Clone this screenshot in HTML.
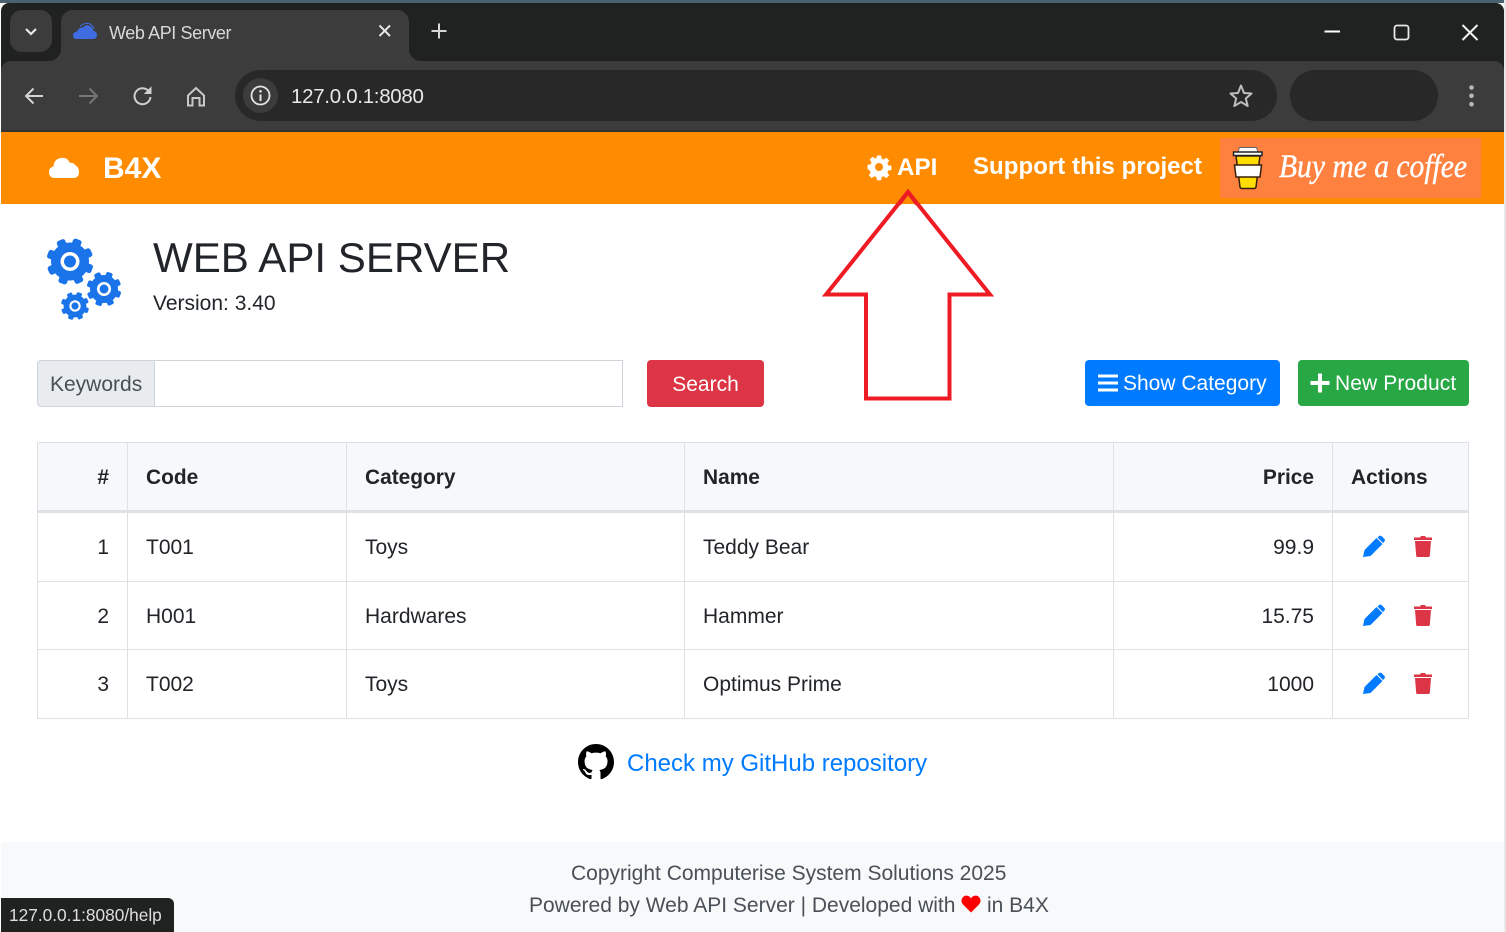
<!DOCTYPE html>
<html><head><meta charset="utf-8"><title>Web API Server</title>
<style>
html,body{margin:0;padding:0;background:#fff}
body{width:1506px;height:932px;position:relative;overflow:hidden;font-family:"Liberation Sans",sans-serif;color:#212529;font-size:21px}
.a{position:absolute;white-space:nowrap}
.l{position:absolute;background:#dee2e6}
.c{position:absolute;white-space:nowrap;line-height:24px;font-size:21px}
.h{font-weight:700;font-size:20.900px}
svg{position:absolute;overflow:visible}
</style></head><body>
<!-- window frame -->
<div class="a" style="left:0;top:0;width:1506px;height:3px;background:#4a626e"></div>
<div class="a" style="left:1504px;top:0;width:2px;height:932px;background:#e8e8e8"></div>
<div class="a" style="left:1px;top:3px;width:1503px;height:129px;background:#202221;border-radius:8px 8px 0 0"></div>
<!-- toolbar -->
<div class="a" style="left:1px;top:61px;width:1503px;height:71px;background:#3c3c3c;border-radius:10px 10px 0 0"></div>
<div class="a" style="left:1px;top:130px;width:1503px;height:2px;background:#333"></div>
<!-- tab -->
<div class="a" style="left:10px;top:10px;width:42px;height:42px;background:#3c3c3c;border-radius:12px"></div>
<svg style="left:0;top:0" width="60" height="60"><path d="M26 29l5 5 5-5" fill="none" stroke="#e6e6e6" stroke-width="2.2"/></svg>
<div class="a" style="left:61px;top:10px;width:348px;height:60px;background:#3c3c3c;border-radius:12px 12px 0 0"></div>
<svg style="left:50px;top:49px" width="12" height="13"><path d="M0 12A12 12 0 0 0 11 0V12Z" fill="#3c3c3c"/></svg>
<svg style="left:409px;top:49px" width="12" height="13"><path d="M12 12A12 12 0 0 1 0 0V12Z" fill="#3c3c3c"/></svg>
<svg style="left:72px;top:22px" width="26" height="18"><path d="M4 17Q1 17 1 13.500Q1 10 5 9.500Q7 5 11 5.500Q14 2 18 4Q21 5.500 21 8.500Q25 9.500 25 13Q25 17 21 17Z" fill="#3f6ce0"/><path d="M8 4.500Q12 .5 17 1.500Q21 3 22 7" fill="none" stroke="#3f6ce0" stroke-width="1"/></svg>
<div class="a" style="left:109px;top:22px;font-size:18px;line-height:22px;color:#d8d8d8;letter-spacing:-.4px">Web API Server</div>
<svg style="left:377px;top:23px" width="16" height="16"><path d="M2.500 2.500L13 13M13 2.500L2.500 13" stroke="#e8e8e8" stroke-width="2"/></svg>
<svg style="left:430px;top:22px" width="18" height="18"><path d="M9 1.500V16.500M1.500 9H16.500" stroke="#d8d8d8" stroke-width="2"/></svg>
<!-- window controls -->
<svg style="left:1320px;top:20px" width="170" height="24"><path d="M4.500 11.500H20" stroke="#fff" stroke-width="2"/><rect x="74.500" y="5.500" width="14" height="14" rx="2.500" fill="none" stroke="#e8e8e8" stroke-width="1.800"/><path d="M142.500 5L157.500 20M157.500 5L142.500 20" stroke="#f0f0f0" stroke-width="2"/></svg>
<!-- nav icons -->
<svg style="left:20px;top:82px" width="190" height="28">
<path d="M23 14H6.500M13.500 6.500L6 14L13.500 21.500" fill="none" stroke="#d4d4d4" stroke-width="2"/>
<path d="M59 14H76.500M69.500 6.500L77 14L69.500 21.500" fill="none" stroke="#767676" stroke-width="2"/>
<path d="M129 9.500A8 8 0 1 0 130.500 15" fill="none" stroke="#d0d0d0" stroke-width="2"/><path d="M131 5.500V11.500H125Z" fill="#d0d0d0" stroke="#d0d0d0" stroke-width="1"/>
<path d="M168 23.500V13.500L176 6L184 13.500V23.500H179.500V16H172.500V23.500Z" fill="none" stroke="#c8c8c8" stroke-width="2"/>
</svg>
<!-- omnibox -->
<div class="a" style="left:235px;top:70px;width:1042px;height:51px;border-radius:26px;background:#282828"></div>
<div class="a" style="left:243px;top:78px;width:35px;height:35px;border-radius:18px;background:#3c3c3c"></div>
<svg style="left:249px;top:84px" width="24" height="24"><circle cx="11.500" cy="11.500" r="9" fill="none" stroke="#e4e4e4" stroke-width="1.800"/><path d="M11.500 10.500V17" stroke="#e4e4e4" stroke-width="2"/><circle cx="11.500" cy="7.300" r="1.300" fill="#e4e4e4"/></svg>
<div class="a" style="left:291px;top:84px;font-size:20.500px;line-height:25px;color:#e8e8e8;letter-spacing:-.3px">127.0.0.1:8080</div>
<svg style="left:1228px;top:83px" width="26" height="26"><path d="M13 2.500L16 10L23.500 10.500L17.800 15.500L19.700 23L13 19L6.300 23L8.200 15.500L2.500 10.500L10 10Z" fill="none" stroke="#bdbdbd" stroke-width="2" stroke-linejoin="round"/></svg>
<div class="a" style="left:1290px;top:70px;width:148px;height:51px;border-radius:26px;background:#282828"></div>
<svg style="left:1465px;top:84px" width="14" height="24"><circle cx="6.500" cy="3.500" r="2.300" fill="#b8b8b8"/><circle cx="6.500" cy="11.800" r="2.300" fill="#b8b8b8"/><circle cx="6.500" cy="20.200" r="2.300" fill="#b8b8b8"/></svg>
<!-- navbar -->
<div class="a" style="left:1px;top:132px;width:1503px;height:72px;background:#ff8c00"></div>
<svg style="left:48px;top:155px" width="32" height="24"><path d="M7 23Q1 23 1 17Q1 12.500 5.500 11.500Q6 4 13 3Q19 1.500 22 8Q25 7 27 10Q31 12 31 17Q31 23 25 23Z" fill="#fff"/></svg>
<div class="a h" style="left:103px;top:152px;font-size:30px;line-height:34px;color:#fff">B4X</div>
<svg style="left:867px;top:155px" width="24" height="24" viewBox="0 0 24 24"><path fill="#fff" fill-rule="evenodd" d="M10 .5h4l.7 3.200 1.900.8 2.800-1.800 2.800 2.800-1.800 2.800.8 1.900 3.200.7v4l-3.200.7-.8 1.900 1.800 2.800-2.800 2.800-2.800-1.800-1.900.8-.7 3.200h-4l-.7-3.200-1.900-.8-2.800 1.800-2.800-2.800 1.800-2.800-.8-1.900L.5 14v-4l3.200-.7.8-1.900L2.700 4.600 5.500 1.800 8.300 3.600l1-.4ZM12 8a4 4 0 1 0 0 8 4 4 0 0 0 0-8Z"/></svg>
<div class="a h" style="left:897px;top:153px;font-size:24.200px;line-height:30px;color:#fff">API</div>
<div class="a h" style="left:973px;top:152px;font-size:24px;line-height:29px;color:#fff;letter-spacing:.05px">Support this project</div>
<div class="a" style="left:1220px;top:138px;width:261px;height:60px;background:#ff813f"></div>
<svg style="left:1232px;top:146px" width="32" height="44">
<path d="M4 10L8 41Q8.300 42.500 10 42.500H22Q23.700 42.500 24 41L28 10Z" fill="#ffdd00" stroke="#3a1f0a" stroke-width="1.500"/>
<path d="M2.500 19H29.500L28 31H4Z" fill="#fff" stroke="#3a1f0a" stroke-width="1.500"/>
<path d="M6 6L7.500 1.500H24.500L26 6Z" fill="#fff" stroke="#666" stroke-width="1"/>
<rect x="1.500" y="6" width="28.500" height="3.500" fill="#fff" stroke="#222" stroke-width="1.500"/>
</svg>
<svg style="left:1278px;top:146px" width="192" height="46"><text x="1" y="31" font-family="Liberation Serif,serif" font-style="italic" font-size="33" fill="#fff" stroke="#fff" stroke-width=".4" textLength="188" lengthAdjust="spacingAndGlyphs">Buy me a coffee</text></svg>
<!-- header -->
<svg style="left:40px;top:232px" width="90" height="95" viewBox="0 0 90 95">
<defs><g id="g"><circle r="19" fill="#1a73e8"/><g fill="#1a73e8"><rect x="-4.500" y="-23.500" width="9" height="47" rx="2.500"/><rect x="-4.500" y="-23.500" width="9" height="47" rx="2.500" transform="rotate(45)"/><rect x="-4.500" y="-23.500" width="9" height="47" rx="2.500" transform="rotate(90)"/><rect x="-4.500" y="-23.500" width="9" height="47" rx="2.500" transform="rotate(135)"/></g><circle r="9.500" fill="#fff"/><circle r="6" fill="#1a73e8"/></g></defs>
<use href="#g" transform="translate(30 29.500) rotate(20)"/>
<use href="#g" transform="translate(64 57) scale(.74) rotate(20)"/>
<use href="#g" transform="translate(35 74) scale(.6) rotate(20)"/>
</svg>
<div class="a" style="left:153px;top:233px;font-size:42.100px;line-height:50px;color:#212529">WEB API SERVER</div>
<div class="a" style="left:153px;top:291px;font-size:21px;line-height:26px">Version: 3.40</div>
<!-- search -->
<div class="a" style="left:37px;top:360px;width:117px;height:45px;background:#e9ecef;border:1px solid #ced4da;border-radius:4px 0 0 4px"></div>
<div class="a" style="left:50px;top:372px;font-size:21px;line-height:26px;color:#495057">Keywords</div>
<div class="a" style="left:154px;top:360px;width:467px;height:45px;background:#fff;border:1px solid #ced4da"></div>
<div class="a" style="left:647px;top:360px;width:117px;height:47px;background:#dc3545;border-radius:4px;color:#fff;text-align:center;line-height:49px;font-size:21px">Search</div>
<!-- arrow -->
<svg style="left:0;top:0" width="1506" height="932"><path d="M908 192L990 294.500H949.500V398.500H866V294.500H826Z" fill="#fff" stroke="#ed1c24" stroke-width="4"/></svg>
<svg style="left:0;top:0" width="1506" height="204"><path d="M908 192L898 204H918Z" fill="#ff8c00"/><path d="M899 204L908 192L917 204" fill="none" stroke="#ed1c24" stroke-width="4"/></svg>
<!-- buttons -->
<div class="a" style="left:1085px;top:360px;width:195px;height:46px;background:#007bff;border-radius:4px"></div>
<svg style="left:1098px;top:374px" width="20" height="18"><path d="M0 2H20M0 9H20M0 16H20" stroke="#fff" stroke-width="3"/></svg>
<div class="a" style="left:1123px;top:371px;font-size:21px;line-height:26px;color:#fff">Show Category</div>
<div class="a" style="left:1298px;top:360px;width:171px;height:46px;background:#28a745;border-radius:4px"></div>
<svg style="left:1310px;top:373px" width="20" height="20"><path d="M10 .5V19.500M.5 10H19.500" stroke="#fff" stroke-width="4"/></svg>
<div class="a" style="left:1335px;top:371px;font-size:21px;line-height:26px;color:#fff;letter-spacing:.1px">New Product</div>
<!-- table -->
<div class="a" style="left:37px;top:442px;width:1431px;height:69px;background:#f7f8fa"></div>
<div class="l" style="left:37px;top:442px;width:1432px;height:1px"></div>
<div class="l" style="left:37px;top:510px;width:1432px;height:3px"></div>
<div class="l" style="left:37px;top:581px;width:1432px;height:1px"></div>
<div class="l" style="left:37px;top:649px;width:1432px;height:1px"></div>
<div class="l" style="left:37px;top:718px;width:1432px;height:1px"></div>
<div class="l" style="left:37px;top:442px;width:1px;height:277px"></div>
<div class="l" style="left:127px;top:442px;width:1px;height:277px"></div>
<div class="l" style="left:346px;top:442px;width:1px;height:277px"></div>
<div class="l" style="left:684px;top:442px;width:1px;height:277px"></div>
<div class="l" style="left:1113px;top:442px;width:1px;height:277px"></div>
<div class="l" style="left:1332px;top:442px;width:1px;height:277px"></div>
<div class="l" style="left:1468px;top:442px;width:1px;height:277px"></div>

<div class="c h" style="right:1397px;top:466px">#</div>
<div class="c h" style="left:146px;top:466px">Code</div>
<div class="c h" style="left:365px;top:466px">Category</div>
<div class="c h" style="left:703px;top:466px">Name</div>
<div class="c h" style="right:192px;top:466px">Price</div>
<div class="c h" style="left:1351px;top:466px">Actions</div>

<div class="c" style="right:1397px;top:536px">1</div>
<div class="c" style="left:146px;top:536px">T001</div>
<div class="c" style="left:365px;top:536px">Toys</div>
<div class="c" style="left:703px;top:536px">Teddy Bear</div>
<div class="c" style="right:192px;top:536px">99.9</div>

<div class="c" style="right:1397px;top:605px">2</div>
<div class="c" style="left:146px;top:605px">H001</div>
<div class="c" style="left:365px;top:605px">Hardwares</div>
<div class="c" style="left:703px;top:605px">Hammer</div>
<div class="c" style="right:192px;top:605px">15.75</div>

<div class="c" style="right:1397px;top:673px">3</div>
<div class="c" style="left:146px;top:673px">T002</div>
<div class="c" style="left:365px;top:673px">Toys</div>
<div class="c" style="left:703px;top:673px">Optimus Prime</div>
<div class="c" style="right:192px;top:673px">1000</div>

<svg width="0" height="0" style="left:0;top:0"><defs>
<g id="pen"><path d="M0 22L1.500 15L13.500 3L19.500 9L7.500 21Z" fill="#007bff"/><path d="M15.500 1.500Q17 0 18.500 1L21.500 4Q22.500 5.500 21 7L20 8L14.500 2.500Z" fill="#007bff"/></g>
<g id="bin"><path d="M2 6H18L16.800 21Q16.700 22 15.500 22H4.500Q3.300 22 3.200 21Z" fill="#dc3545"/><path d="M1 2.500H7L8 1H12L13 2.500H19V5H1Z" fill="#dc3545"/></g>
</defs></svg>
<svg style="left:1363px;top:535px" width="24" height="24"><use href="#pen"/></svg>
<svg style="left:1413px;top:535px" width="20" height="23"><use href="#bin"/></svg>
<svg style="left:1363px;top:604px" width="24" height="24"><use href="#pen"/></svg>
<svg style="left:1413px;top:604px" width="20" height="23"><use href="#bin"/></svg>
<svg style="left:1363px;top:672px" width="24" height="24"><use href="#pen"/></svg>
<svg style="left:1413px;top:672px" width="20" height="23"><use href="#bin"/></svg>
<!-- github -->
<svg style="left:578px;top:744px" width="36" height="36" viewBox="0 0 16 16"><path fill="#000" d="M8 0C3.580 0 0 3.580 0 8c0 3.540 2.290 6.530 5.470 7.590.4.070.55-.17.55-.38 0-.19-.01-.82-.01-1.490-2.010.37-2.530-.49-2.690-.94-.09-.23-.48-.94-.82-1.130-.28-.15-.68-.52-.01-.53.630-.01 1.080.58 1.230.82.720 1.210 1.870.87 2.330.66.070-.52.280-.87.510-1.070-1.780-.2-3.640-.89-3.640-3.950 0-.87.310-1.590.820-2.150-.08-.2-.36-1.020.08-2.120 0 0 .67-.21 2.200.82.640-.18 1.320-.27 2-.27.680 0 1.360.09 2 .27 1.530-1.040 2.200-.82 2.200-.82.440 1.100.16 1.920.08 2.120.51.560.82 1.270.82 2.150 0 3.070-1.870 3.750-3.650 3.950.29.25.54.730.54 1.480 0 1.070-.01 1.930-.01 2.200 0 .21.150.46.550.38A8.013 8.013 0 0 0 16 8c0-4.420-3.580-8-8-8z"/></svg>
<div class="a" style="left:627px;top:749px;font-size:24px;line-height:30px;color:#007bff">Check my GitHub repository</div>
<!-- footer -->
<div class="a" style="left:1px;top:842px;width:1503px;height:90px;background:#f8f9fa"></div>
<div class="a" style="left:571px;top:861px;font-size:21px;line-height:26px;color:#495057">Copyright Computerise System Solutions 2025</div>
<div class="a" style="left:529px;top:893px;font-size:21px;line-height:26px;color:#495057">Powered by Web API Server | Developed with</div>
<svg style="left:961px;top:895px" width="20" height="18"><path d="M10 17.500L2 9.500Q-.5 6.500 1 3.500Q3 0 6.500 .8Q9 1.500 10 3.500Q11 1.500 13.500 .8Q17 0 19 3.500Q20.500 6.500 18 9.500Z" fill="#f00"/></svg>
<div class="a" style="left:987px;top:893px;font-size:21px;line-height:26px;color:#495057">in B4X</div>
<!-- status -->
<div class="a" style="left:1px;top:898px;width:173px;height:34px;background:#202221;border-radius:0 6px 0 0"></div>
<div class="a" style="left:9px;top:903px;font-size:17.300px;line-height:24px;color:#dedede">127.0.0.1:8080/help</div>
</body></html>
